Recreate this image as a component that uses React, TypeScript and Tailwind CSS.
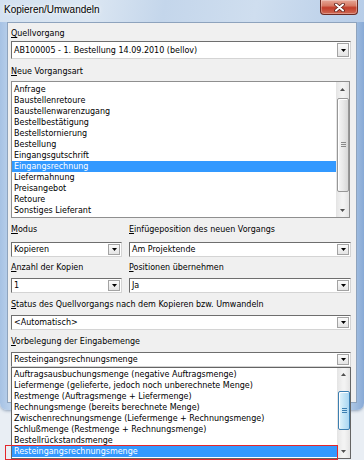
import React from "react";

const Tri = ({ color = "#000" }: { color?: string }) => (
  <svg width="5" height="3" viewBox="0 0 5 3">
    <path d="M0 0H5L2.5 3Z" fill={color} />
  </svg>
);

const TriUp = ({ color = "#505050" }: { color?: string }) => (
  <svg width="5" height="3" viewBox="0 0 5 3">
    <path d="M0 3H5L2.5 0Z" fill={color} />
  </svg>
);

function DropBtn() {
  return (
    <div className="w-[12px] shrink-0 my-[1px] mr-[1px] flex items-center justify-center bg-[linear-gradient(180deg,#fbfbfb,#e4e4e4)] border border-[#a3a3a3]">
      <Tri />
    </div>
  );
}

function Combo({ text, cls }: { text: string; cls: string }) {
  return (
    <div className={cls}>
      <div className="flex-1 flex items-center pl-[2px] whitespace-nowrap overflow-hidden">{text}</div>
      <DropBtn />
    </div>
  );
}

function Label({ k, rest }: { k: string; rest: string }) {
  return (
    <div className="h-[12px] leading-[12px] whitespace-nowrap">
      <span className="underline underline-offset-[1px]">{k}</span>
      {rest}
    </div>
  );
}

const comboBase =
  "flex h-[15px] bg-white border border-t-[#6e6e6e] border-l-[#6e6e6e] border-r-[#d4d4d4] border-b-[#d4d4d4]";

const vorgaenge = [
  "Anfrage",
  "Baustellenretoure",
  "Baustellenwarenzugang",
  "Bestellbestätigung",
  "Bestellstornierung",
  "Bestellung",
  "Eingangsgutschrift",
  "Eingangsrechnung",
  "Liefermahnung",
  "Preisangebot",
  "Retoure",
  "Sonstiges Lieferant",
];

const mengen = [
  "Auftragsausbuchungsmenge (negative Auftragsmenge)",
  "Liefermenge (gelieferte, jedoch noch unberechnete Menge)",
  "Restmenge (Auftragsmenge + Liefermenge)",
  "Rechnungsmenge (bereits berechnete Menge)",
  "Zwischenrechnungsmenge (Liefermenge + Rechnungsmenge)",
  "Schlußmenge (Restmenge + Rechnungsmenge)",
  "Bestellrückstandsmenge",
  "Resteingangsrechnungsmenge",
];

function Grip({ color }: { color: string }) {
  return (
    <svg width="5" height="6" viewBox="0 0 5 6">
      <path d="M0 0.5H5M0 2.5H5M0 4.5H5" stroke={color} strokeWidth="1" />
    </svg>
  );
}

export default function App() {
  return (
    <div className="relative w-[364px] h-[460px] overflow-hidden bg-[#e9eef4] text-black font-['DejaVu_Sans',Verdana,sans-serif] text-[8px] leading-[11px]">
      {/* window */}
      <div className="h-[410px] rounded-b-[7px] bg-[linear-gradient(90deg,#a6c2e4_0%,#bcd2ec_3%,#c3d7ee_50%,#b3cbe8_96%,#88aad6_100%)] flex flex-col shadow-[0_1px_3px_rgba(60,90,130,0.5)]">
        {/* title bar */}
        <div className="h-[22px] flex items-start bg-[linear-gradient(100deg,#d3e1f0_0%,#dbe6f2_25%,#c4d6eb_45%,#cfdeef_70%,#b7cde8_100%)]">
          <span className="pl-[4px] pt-[4px] font-['Liberation_Sans',Arial,sans-serif] text-[10px] leading-[12px] [text-shadow:0_0_6px_#ffffff,0_0_3px_#ffffff]">
            Kopieren/Umwandeln
          </span>
          <div className="ml-auto mr-[6px] w-[38px] h-[15px] rounded-b-[4px] border border-t-0 border-[#6b2a22] bg-[linear-gradient(180deg,#e6a797_0%,#d77b66_40%,#c23d2a_55%,#cf6a55_100%)] flex items-center justify-center shadow-[inset_0_0_0_1px_rgba(255,255,255,0.3)]">
            <svg width="11" height="9" viewBox="0 0 11 9">
              <path d="M2 1.5L9 7.5M9 1.5L2 7.5" stroke="#5a1d16" strokeWidth="3.6" strokeLinecap="round" />
              <path d="M2 1.5L9 7.5M9 1.5L2 7.5" stroke="#ffffff" strokeWidth="2" strokeLinecap="round" />
            </svg>
          </div>
        </div>

        {/* client area */}
        <div className="mx-[7px] flex-1 bg-[#f0f0f0] border border-[#8ea3bd] pl-[3px] pr-[5px] flex flex-col">
          <div className="mt-[5px]">
            <Label k="Q" rest="uellvorgang" />
          </div>
          <div className="mt-[1px]">
            <Combo
              text="AB100005 - 1. Bestellung 14.09.2010 (bellov)"
              cls="flex h-[18px] bg-white border border-t-[#6e6e6e] border-l-[#6e6e6e] border-r-[#d4d4d4] border-b-[#d4d4d4]"
            />
          </div>

          <div className="mt-[7px]">
            <Label k="N" rest="eue Vorgangsart" />
          </div>
          {/* listbox */}
          <div className="mt-[3px] mr-[1px] h-[137px] bg-white border border-[#8f8f8f] flex">
            <div className="flex-1 pt-[2px]">
              {vorgaenge.map((t) => (
                <div
                  key={t}
                  className={
                    t === "Eingangsrechnung"
                      ? "h-[11px] leading-[11px] pl-[2px] bg-[#3399ff] text-white whitespace-nowrap"
                      : "h-[11px] leading-[11px] pl-[2px] whitespace-nowrap"
                  }
                >
                  {t}
                </div>
              ))}
            </div>
            <div className="w-[13px] flex flex-col bg-[linear-gradient(90deg,#e4e4e4,#f3f3f3_45%,#f3f3f3_60%,#e4e4e4)]">
              <div className="h-[14px] flex items-center justify-center">
                <TriUp />
              </div>
              <div className="flex-1 flex flex-col">
                <div className="mt-[2px] ml-[1px] h-[94px] rounded-[2px] border border-[#979797] bg-[linear-gradient(90deg,#f6f6f6,#e9e9e9_50%,#d8d8d8)] shadow-[inset_1px_1px_0_#ffffff] flex items-center justify-center">
                  <Grip color="#8a8a8a" />
                </div>
              </div>
              <div className="h-[13px] flex items-center justify-center">
                <Tri color="#505050" />
              </div>
            </div>
          </div>

          {/* Modus / Einfügeposition / Anzahl / Positionen */}
          <div className="mt-[6px] grid grid-cols-[111px_1fr] gap-x-[7px]">
            <div className="flex flex-col">
              <Label k="M" rest="odus" />
              <div className="mt-[6px]">
                <Combo text="Kopieren" cls={comboBase} />
              </div>
              <div className="mt-[5px]">
                <Label k="A" rest="nzahl der Kopien" />
              </div>
              <div className="mt-[4px]">
                <Combo text="1" cls={comboBase} />
              </div>
            </div>
            <div className="flex flex-col">
              <Label k="E" rest="infügeposition des neuen Vorgangs" />
              <div className="mt-[6px]">
                <Combo text="Am Projektende" cls={comboBase} />
              </div>
              <div className="mt-[5px]">
                <Label k="P" rest="ositionen übernehmen" />
              </div>
              <div className="mt-[4px]">
                <Combo text="Ja" cls={comboBase} />
              </div>
            </div>
          </div>

          <div className="mt-[6px]">
            <Label k="S" rest="tatus des Quellvorgangs nach dem Kopieren bzw. Umwandeln" />
          </div>
          <div className="mt-[4px]">
            <Combo text="<Automatisch>" cls={comboBase} />
          </div>

          <div className="mt-[6px]">
            <Label k="V" rest="orbelegung der Eingabemenge" />
          </div>
          <div className="mt-[4px]">
            <Combo text="Resteingangsrechnungsmenge" cls={comboBase} />
          </div>
        </div>
        <div className="h-[7px]" />
      </div>

      {/* dropdown list popup */}
      <div className="absolute left-[11px] top-[367px] w-[340px] h-[92px] bg-white border border-[#646464] flex">
        <div className="flex-1 pt-[1px]">
          {mengen.map((t) => (
            <div
              key={t}
              className={
                t === "Resteingangsrechnungsmenge"
                  ? "h-[11px] leading-[11px] pl-[2px] bg-[#3399ff] text-white whitespace-nowrap"
                  : "h-[11px] leading-[11px] pl-[2px] whitespace-nowrap"
              }
            >
              {t}
            </div>
          ))}
        </div>
        <div className="w-[13px] flex flex-col bg-[linear-gradient(90deg,#e4e4e4,#f3f3f3_45%,#f3f3f3_60%,#e4e4e4)]">
          <div className="h-[13px] flex items-center justify-center">
            <TriUp />
          </div>
          <div className="flex-1 flex flex-col">
            <div className="mt-[10px] ml-[1px] h-[39px] rounded-[2px] border border-[#3c7fb1] bg-[linear-gradient(90deg,#e3f4fc,#c4e5f6_50%,#a9d6f2)] shadow-[inset_1px_1px_0_#ffffff] flex items-center justify-center">
              <Grip color="#3c7fb1" />
            </div>
          </div>
          <div className="h-[13px] flex items-center justify-center">
            <Tri color="#505050" />
          </div>
        </div>
      </div>

      {/* red annotation frame */}
      <div className="absolute left-[5px] top-[445px] w-[333px] h-[15px] border border-[#e3262b]" />
    </div>
  );
}
